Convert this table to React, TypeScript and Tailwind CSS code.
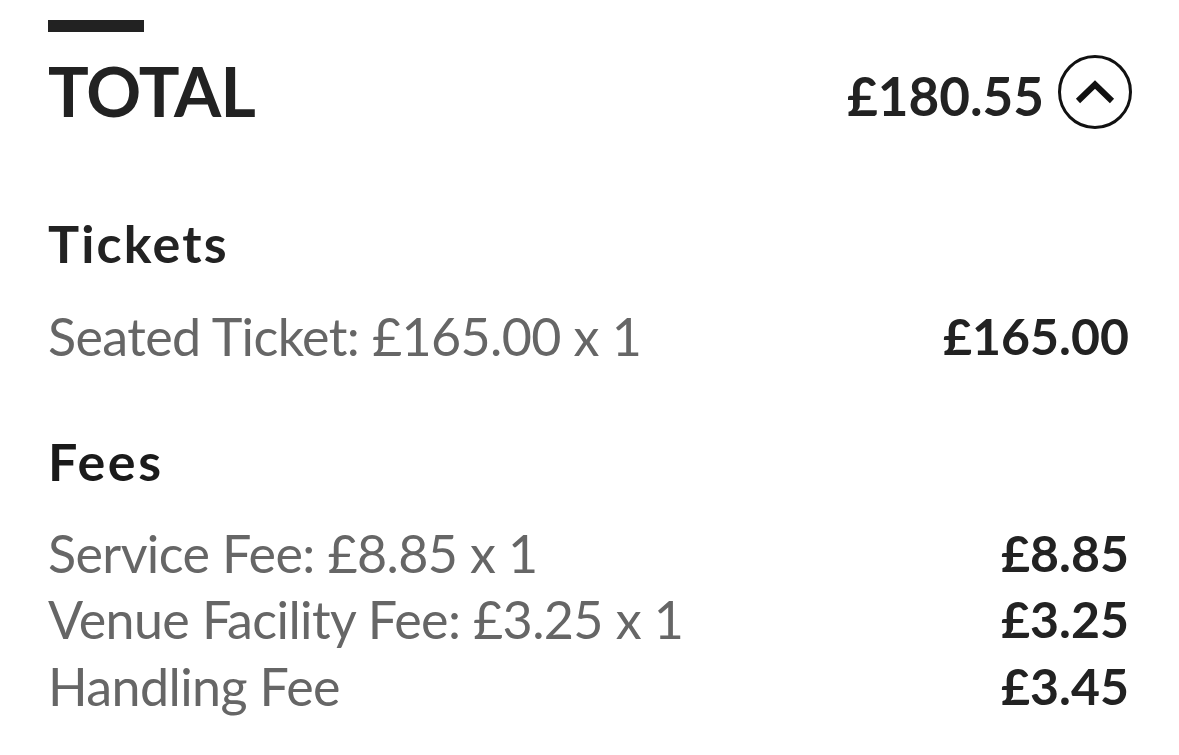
import React from "react";

const font = { fontFamily: "Lato, 'Noto Sans', sans-serif" };

function Row({ label, amount }: { label: string; amount: string }) {
  return (
    <div className="mr-[3px] flex items-start justify-between leading-[66.5px]">
      <span className="text-[52px] tracking-[-0.6px] text-[#666666]">{label}</span>
      <span className="text-[50px] font-bold text-[#222222]">{amount}</span>
    </div>
  );
}

export default function App() {
  return (
    <div className="min-h-[755px] w-[1179px] bg-white pl-[48px] pr-[47px]" style={font}>
      <div className="pt-[20px]">
        <div className="h-[12px] w-[96px] bg-[#222222]" />
      </div>
      <div className="mt-[23px] flex h-[73px] items-start justify-between">
        <div className="mt-[2px] text-[68px] font-bold leading-[68px] tracking-[-0.8px] text-[#222222]">TOTAL</div>
        <div className="flex items-start gap-[14px]">
          <div className="mt-[14px] text-[53px] font-bold leading-[54px] text-[#222222]">£180.55</div>
          <div className="flex h-[74px] w-[74px] items-center justify-center rounded-full border-[3px] border-[#111111]">
            <svg width="40" height="24" viewBox="0 0 40 24">
              <polyline points="3,21 20,4.5 37,21" fill="none" stroke="#111111" strokeWidth="6" strokeLinejoin="miter" />
            </svg>
          </div>
        </div>
      </div>
      <div className="mt-[90px] text-[52px] font-bold leading-[50px] tracking-[2.2px] text-[#222222]">Tickets</div>
      <div className="mt-[35px]">
        <Row label="Seated Ticket: £165.00 x 1" amount="£165.00" />
      </div>
      <div className="mt-[66px] text-[52px] font-bold leading-[50px] tracking-[2.5px] text-[#1a1a1a]">Fees</div>
      <div className="mt-[34px] flex flex-col">
        <Row label="Service Fee: £8.85 x 1" amount="£8.85" />
        <Row label="Venue Facility Fee: £3.25 x 1" amount="£3.25" />
        <Row label="Handling Fee" amount="£3.45" />
      </div>
    </div>
  );
}
